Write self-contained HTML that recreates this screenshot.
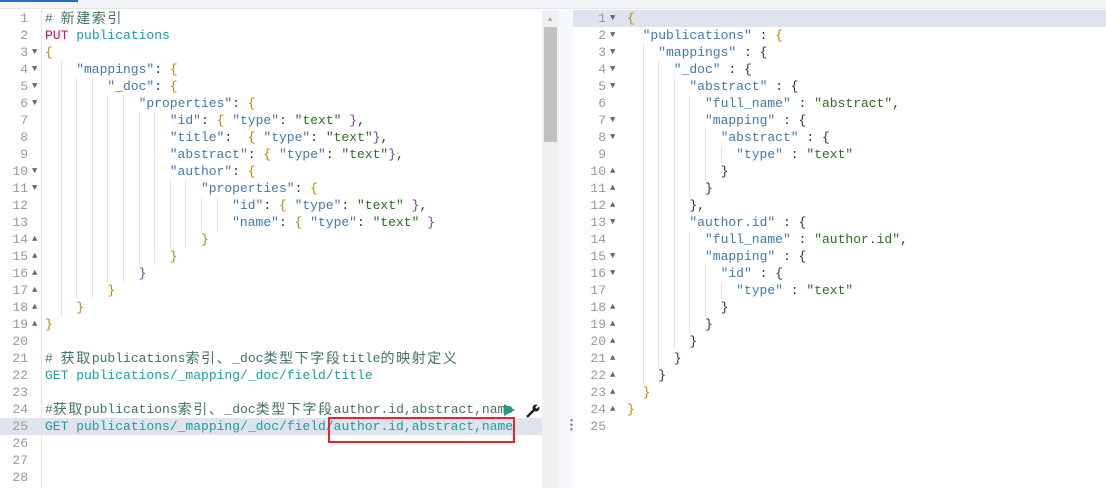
<!DOCTYPE html>
<html><head><meta charset="utf-8"><style>
*{margin:0;padding:0;box-sizing:border-box}
body{width:1106px;height:488px;overflow:hidden;background:#fff;position:relative;font-family:"Liberation Mono","Noto Sans CJK SC",monospace;font-size:13px}
.top{position:absolute;left:0;top:0;width:1106px;height:9px;background:#f3f4f7;border-bottom:1px solid #e2e4ea}
.tab{position:absolute;left:0;top:0;width:78px;height:2px;background:#1f6fd1}
.gut{position:absolute;top:10px;color:#999;line-height:17px;text-align:right}
.gut div{height:17px;position:relative}
.code{position:absolute;top:10px;line-height:17px}
.code div{height:17px;white-space:pre}
i{display:inline-block;width:15.6px;height:17px;vertical-align:top;border-left:1px solid #e4e4e4;font-style:normal}
b{display:inline-block;width:15.6px;height:17px;vertical-align:top}
.z{display:inline-block;vertical-align:top;height:17px;font-family:"Noto Sans CJK SC",sans-serif;font-size:14px;letter-spacing:1.6px;line-height:17px}
.c{color:#41755c}.m{color:#c80a68}.u{color:#1a9e9e}.k{color:#4078b0}.s{color:#2a6e1f}.p{color:#333}.y{color:#b58900}.v{color:#7a3e9d}
.a{font-size:9px;position:absolute;color:#666}
</style></head><body>
<div class="top"><div class="tab"></div></div>
<div style="position:absolute;left:0;top:418px;width:542px;height:17px;background:#dfe4ec"></div>
<div style="position:absolute;left:41px;top:10px;width:1px;height:478px;background:#e6e6e6"></div>
<div class="gut" style="left:0;width:28px">
<div>1</div><div>2</div><div>3<span class="a" style="left:32px">▼</span></div><div>4<span class="a" style="left:32px">▼</span></div><div>5<span class="a" style="left:32px">▼</span></div><div>6<span class="a" style="left:32px">▼</span></div><div>7</div><div>8</div><div>9</div><div>10<span class="a" style="left:32px">▼</span></div><div>11<span class="a" style="left:32px">▼</span></div><div>12</div><div>13</div><div>14<span class="a" style="left:32px">▲</span></div><div>15<span class="a" style="left:32px">▲</span></div><div>16<span class="a" style="left:32px">▲</span></div><div>17<span class="a" style="left:32px">▲</span></div><div>18<span class="a" style="left:32px">▲</span></div><div>19<span class="a" style="left:32px">▲</span></div><div>20</div><div>21</div><div>22</div><div>23</div><div>24</div><div>25</div><div>26</div><div>27</div><div>28</div>
</div>
<div class="code" style="left:45px">
<div class="c"># <span class="z">新建索引</span></div>
<div><span class="m">PUT</span> <span class="u">publications</span></div>
<div class="y">{</div>
<div><b></b><i></i><span class="k">"mappings"</span><span class="p">: </span><span class="y">{</span></div>
<div><b></b><i></i><i></i><i></i><span class="k">"_doc"</span><span class="p">: </span><span class="y">{</span></div>
<div><b></b><i></i><i></i><i></i><i></i><i></i><span class="k">"properties"</span><span class="p">: </span><span class="y">{</span></div>
<div><b></b><i></i><i></i><i></i><i></i><i></i><i></i><i></i><span class="k">"id"</span><span class="p">: </span><span class="y">{</span> <span class="k">"type"</span><span class="p">: </span><span class="s">"text"</span> <span class="v">}</span><span class="p">,</span></div>
<div><b></b><i></i><i></i><i></i><i></i><i></i><i></i><i></i><span class="k">"title"</span><span class="p">:  </span><span class="y">{</span> <span class="k">"type"</span><span class="p">: </span><span class="s">"text"</span><span class="v">}</span><span class="p">,</span></div>
<div><b></b><i></i><i></i><i></i><i></i><i></i><i></i><i></i><span class="k">"abstract"</span><span class="p">: </span><span class="y">{</span> <span class="k">"type"</span><span class="p">: </span><span class="s">"text"</span><span class="v">}</span><span class="p">,</span></div>
<div><b></b><i></i><i></i><i></i><i></i><i></i><i></i><i></i><span class="k">"author"</span><span class="p">: </span><span class="y">{</span></div>
<div><b></b><i></i><i></i><i></i><i></i><i></i><i></i><i></i><i></i><i></i><span class="k">"properties"</span><span class="p">: </span><span class="y">{</span></div>
<div><b></b><i></i><i></i><i></i><i></i><i></i><i></i><i></i><i></i><i></i><i></i><i></i><span class="k">"id"</span><span class="p">: </span><span class="y">{</span> <span class="k">"type"</span><span class="p">: </span><span class="s">"text"</span> <span class="v">}</span><span class="p">,</span></div>
<div><b></b><i></i><i></i><i></i><i></i><i></i><i></i><i></i><i></i><i></i><i></i><i></i><span class="k">"name"</span><span class="p">: </span><span class="y">{</span> <span class="k">"type"</span><span class="p">: </span><span class="s">"text"</span> <span class="v">}</span></div>
<div><b></b><i></i><i></i><i></i><i></i><i></i><i></i><i></i><i></i><i></i><span class="y">}</span></div>
<div><b></b><i></i><i></i><i></i><i></i><i></i><i></i><i></i><span class="y">}</span></div>
<div><b></b><i></i><i></i><i></i><i></i><i></i><span class="v">}</span></div>
<div><b></b><i></i><i></i><i></i><span class="y">}</span></div>
<div><b></b><i></i><span class="y">}</span></div>
<div class="y">}</div>
<div></div>
<div class="c"># <span class="z">获取</span>publications<span class="z">索引、</span>_doc<span class="z">类型下字段</span>title<span class="z">的映射定义</span></div>
<div><span class="u">GET publications/_mapping/_doc/field/title</span></div>
<div></div>
<div class="c">#<span class="z">获取</span>publications<span class="z">索引、</span>_doc<span class="z">类型下字段</span>author.id,abstract,name</div>
<div><span class="u">GET publications/_mapping/_doc/field/author.id,abstract,name</span><span style="display:inline-block;width:2px;height:15px;background:#000;vertical-align:middle"></span></div>
</div>
<div style="position:absolute;left:328px;top:417px;width:187px;height:26px;border:2px solid #e5252a"></div>
<svg style="position:absolute;left:502px;top:403px" width="14" height="14"><path d="M2 1 L13 7 L2 13 Z" fill="#1f9c8f"/></svg>
<svg style="position:absolute;left:525px;top:403px" width="16" height="16"><path d="M2 14 L9 7" stroke="#222" stroke-width="2.5"/><circle cx="11" cy="5" r="3.5" fill="#222"/><path d="M11 5 L14 2" stroke="#fff" stroke-width="2"/></svg>
<div style="position:absolute;left:542px;top:10px;width:17px;height:478px;background:#f0f0f0"></div>
<div style="position:absolute;left:548px;top:16px;font-size:7px;color:#a0a0a0">▲</div>
<div style="position:absolute;left:544px;top:27px;width:13px;height:115px;background:#c1c1c1"></div>
<div style="position:absolute;left:559px;top:10px;width:14px;height:478px;background:#f5f7fa"></div>
<div style="position:absolute;left:565px;top:419px;color:#666;font-size:13px;font-weight:bold;line-height:13px">⋮</div>
<div style="position:absolute;left:573px;top:10px;width:533px;height:17px;background:#dfe4ec"></div>
<div class="gut" style="left:573px;width:33px">
<div>1<span class="a" style="left:37px">▼</span></div><div>2<span class="a" style="left:37px">▼</span></div><div>3<span class="a" style="left:37px">▼</span></div><div>4<span class="a" style="left:37px">▼</span></div><div>5<span class="a" style="left:37px">▼</span></div><div>6</div><div>7<span class="a" style="left:37px">▼</span></div><div>8<span class="a" style="left:37px">▼</span></div><div>9</div><div>10<span class="a" style="left:37px">▲</span></div><div>11<span class="a" style="left:37px">▲</span></div><div>12<span class="a" style="left:37px">▲</span></div><div>13<span class="a" style="left:37px">▼</span></div><div>14</div><div>15<span class="a" style="left:37px">▼</span></div><div>16<span class="a" style="left:37px">▼</span></div><div>17</div><div>18<span class="a" style="left:37px">▲</span></div><div>19<span class="a" style="left:37px">▲</span></div><div>20<span class="a" style="left:37px">▲</span></div><div>21<span class="a" style="left:37px">▲</span></div><div>22<span class="a" style="left:37px">▲</span></div><div>23<span class="a" style="left:37px">▲</span></div><div>24<span class="a" style="left:37px">▲</span></div><div>25</div>
</div>
<div class="code" style="left:627px">
<div class="y">{</div>
<div><b></b><span class="k">"publications"</span><span class="p"> : </span><span class="y">{</span></div>
<div><b></b><i></i><span class="k">"mappings"</span><span class="p"> : </span><span class="p">{</span></div>
<div><b></b><i></i><i></i><span class="k">"_doc"</span><span class="p"> : </span><span class="p">{</span></div>
<div><b></b><i></i><i></i><i></i><span class="k">"abstract"</span><span class="p"> : </span><span class="p">{</span></div>
<div><b></b><i></i><i></i><i></i><i></i><span class="k">"full_name"</span><span class="p"> : </span><span class="s">"abstract"</span><span class="p">,</span></div>
<div><b></b><i></i><i></i><i></i><i></i><span class="k">"mapping"</span><span class="p"> : </span><span class="p">{</span></div>
<div><b></b><i></i><i></i><i></i><i></i><i></i><span class="k">"abstract"</span><span class="p"> : </span><span class="p">{</span></div>
<div><b></b><i></i><i></i><i></i><i></i><i></i><i></i><span class="k">"type"</span><span class="p"> : </span><span class="s">"text"</span></div>
<div><b></b><i></i><i></i><i></i><i></i><i></i><span class="p">}</span></div>
<div><b></b><i></i><i></i><i></i><i></i><span class="p">}</span></div>
<div><b></b><i></i><i></i><i></i><span class="p">},</span></div>
<div><b></b><i></i><i></i><i></i><span class="k">"author.id"</span><span class="p"> : </span><span class="p">{</span></div>
<div><b></b><i></i><i></i><i></i><i></i><span class="k">"full_name"</span><span class="p"> : </span><span class="s">"author.id"</span><span class="p">,</span></div>
<div><b></b><i></i><i></i><i></i><i></i><span class="k">"mapping"</span><span class="p"> : </span><span class="p">{</span></div>
<div><b></b><i></i><i></i><i></i><i></i><i></i><span class="k">"id"</span><span class="p"> : </span><span class="p">{</span></div>
<div><b></b><i></i><i></i><i></i><i></i><i></i><i></i><span class="k">"type"</span><span class="p"> : </span><span class="s">"text"</span></div>
<div><b></b><i></i><i></i><i></i><i></i><i></i><span class="p">}</span></div>
<div><b></b><i></i><i></i><i></i><i></i><span class="p">}</span></div>
<div><b></b><i></i><i></i><i></i><span class="p">}</span></div>
<div><b></b><i></i><i></i><span class="p">}</span></div>
<div><b></b><i></i><span class="p">}</span></div>
<div><b></b><span class="y">}</span></div>
<div class="y">}</div>
<div></div>
</div>
</body></html>
